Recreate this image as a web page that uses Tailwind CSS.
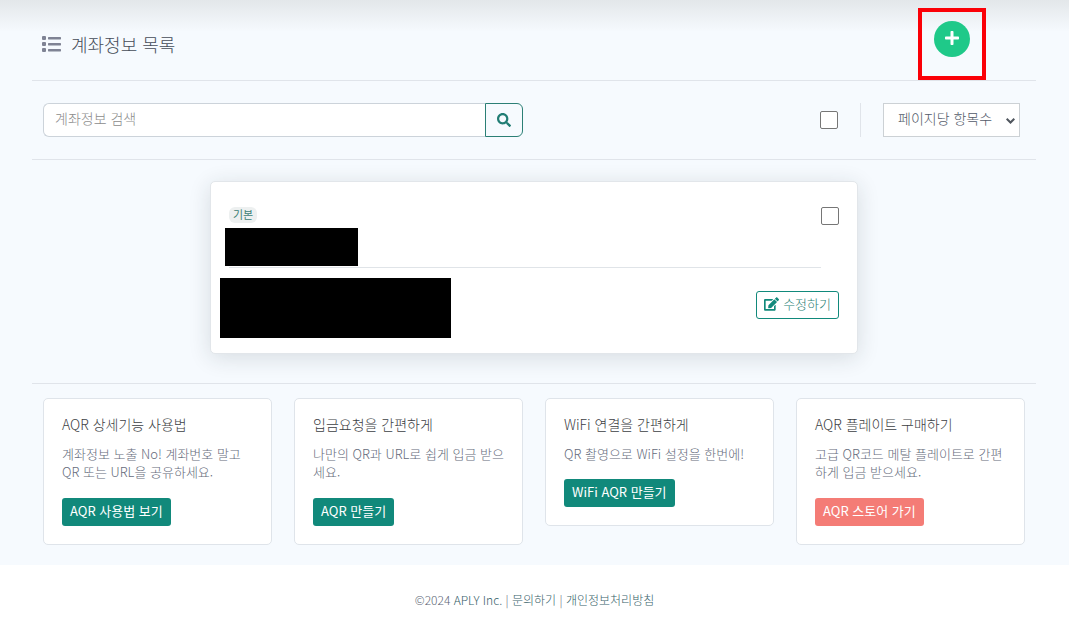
<!DOCTYPE html>
<html lang="ko">
<head>
    <meta charset="UTF-8">
    <meta name="viewport" content="width=device-width, initial-scale=1.0">
    <title>계좌정보 목록</title>
    <script src="https://cdn.jsdelivr.net/npm/@tailwindcss/browser@4"></script>
</head>
<body class="bg-white font-['Noto_Sans_CJK_KR',sans-serif] font-light text-[#687281]">
    <main class="relative bg-[#f6fafe] pb-5 pl-8 pr-[33px]">
        <!-- Shadow under the top bar -->
        <div class="absolute inset-x-0 top-0 h-8 bg-linear-to-b from-[#e3e7ea] to-[#f6fafe]"></div>

        <!-- Header -->
        <header class="relative flex h-20 items-center justify-between pl-[10px] pr-[66px]">
            <h1 class="flex items-center gap-[10px] pt-2 text-lg text-[#454c58]">
                <svg class="h-4 w-[19px] fill-[#7f8394]" viewBox="0 0 19 16" aria-hidden="true">
                    <rect x="0" y="0" width="4" height="4" rx="1"/>
                    <rect x="0" y="6" width="4" height="4" rx="1"/>
                    <rect x="0" y="12" width="4" height="4" rx="1"/>
                    <rect x="6" y="1" width="13" height="2.4" rx=".6"/>
                    <rect x="6" y="7" width="13" height="2.4" rx=".6"/>
                    <rect x="6" y="13" width="13" height="2.4" rx=".6"/>
                </svg>
                계좌정보 목록
            </h1>
            <button type="button" aria-label="추가" class="mb-0.5 flex size-9 items-center justify-center rounded-full bg-[#1fc989] pb-0.5">
                <svg class="h-4 w-[14px] fill-white" viewBox="0 0 448 512" aria-hidden="true">
                    <path d="M416 208H272V64c0-17.67-14.33-32-32-32h-32c-17.67 0-32 14.33-32 32v144H32c-17.67 0-32 14.33-32 32v32c0 17.67 14.33 32 32 32h144v144c0 17.67 14.33 32 32 32h32c17.67 0 32-14.33 32-32V304h144c17.67 0 32-14.33 32-32v-32c0-17.67-14.33-32-32-32z"/>
                </svg>
            </button>
            <!-- Highlight around the add button -->
            <div class="pointer-events-none absolute right-[50px] top-2 z-10 h-[72px] w-[68px] border-4 border-[#fb0007]"></div>
        </header>

        <!-- Search and list options -->
        <div class="flex items-center justify-between border-y border-[#e0e4ea] py-[22px] pl-[11px] pr-4">
            <form class="flex h-[34px] w-[480px]">
                <input type="search" aria-label="계좌정보 검색" placeholder="계좌정보 검색" class="min-w-0 flex-1 rounded-l-md border border-r-0 border-[#ccd3da] bg-white px-[11px] pb-1 text-sm outline-none placeholder:text-[#8c8c8c]">
                <button type="button" aria-label="검색" class="flex w-[38px] items-center justify-center rounded-r-md border border-[#2b7f75]">
                    <svg class="size-[14px] fill-[#217d74]" viewBox="0 0 512 512" aria-hidden="true">
                        <path d="M505 442.7L405.3 343c-4.5-4.5-10.6-7-17-7H372c27.6-35.3 44-79.7 44-128C416 93.1 322.9 0 208 0S0 93.1 0 208s93.1 208 208 208c48.3 0 92.7-16.4 128-44v16.3c0 6.4 2.5 12.5 7 17l99.7 99.7c9.4 9.4 24.6 9.4 33.9 0l28.3-28.3c9.4-9.4 9.4-24.6.1-34zM208 336c-70.7 0-128-57.2-128-128 0-70.7 57.2-128 128-128 70.7 0 128 57.2 128 128 0 70.7-57.2 128-128 128z"/>
                    </svg>
                </button>
            </form>
            <div class="flex items-center gap-[22px]">
                <input type="checkbox" aria-label="전체 선택" class="size-[18px] appearance-none rounded-xs border border-[#767676] bg-white checked:bg-[#11897b]">
                <div class="h-[34px] w-px bg-[#e0e4ea]"></div>
                <div class="relative h-[34px] w-[137px]">
                    <select aria-label="페이지당 항목수" class="size-full appearance-none border border-[#ccd1d5] bg-white pb-1 pl-[14px] text-sm text-[#525a69]">
                        <option>페이지당 항목수</option>
                        <option>10</option>
                        <option>20</option>
                    </select>
                    <svg class="pointer-events-none absolute right-[5px] top-[14px] h-2 w-[9px] fill-none stroke-[#50565e] stroke-2" viewBox="0 0 9 8" aria-hidden="true">
                        <path d="M.7 1.7l3.8 3.8 3.8-3.8"/>
                    </svg>
                </div>
            </div>
        </div>

        <!-- Account card -->
        <section class="border-b border-[#e0e4ea] pb-[29px] pt-[21px]">
            <div class="mx-auto w-full max-w-[648px] rounded-[5px] border border-[#e2e6ea] bg-white px-[18px] pb-[15px] pt-[25px] shadow-[0_4px_22px_rgba(30,40,50,0.14)]">
                <div class="flex items-start">
                    <div class="flex-1 border-b border-[#e0e4e8] pb-px">
                        <span class="flex h-4 w-7 items-center justify-center rounded-md bg-[#edf0f0] pb-0.5 text-[11px] font-normal leading-[14px] text-[#3b8175]">기본</span>
                        <div class="-ml-1 mt-[5px] h-[38px] w-[133px] bg-black"></div>
                    </div>
                    <input type="checkbox" aria-label="계좌 선택" class="size-[18px] appearance-none rounded-xs border border-[#767676] bg-white checked:bg-[#11897b]">
                </div>
                <div class="mt-[10px] flex items-start justify-between">
                    <div class="-ml-[9px] h-[60px] w-[231px] bg-black"></div>
                    <button type="button" class="mt-[13px] flex h-7 items-center gap-1 rounded-[3px] border border-[#11897b] px-[7px] pb-0.5 text-[13px] leading-[18px] text-[#2b7f75]">
                        <svg class="h-[14px] w-[15px] fill-[#11897b]" viewBox="0 0 576 512" aria-hidden="true">
                            <path d="M402.6 83.2l90.2 90.2c3.8 3.8 3.8 10 0 13.8L274.4 405.6l-92.8 10.3c-12.4 1.4-22.9-9.1-21.5-21.5l10.3-92.8L388.8 83.2c3.8-3.8 10-3.8 13.8 0zm162-22.9l-48.8-48.8c-15.2-15.2-39.9-15.2-55.2 0l-35.4 35.4c-3.8 3.8-3.8 10 0 13.8l90.2 90.2c3.8 3.8 10 3.8 13.8 0l35.4-35.4c15.2-15.3 15.2-40 0-55.2zM384 346.2V448H64V128h229.8c3.2 0 6.2-1.3 8.5-3.5l40-40c7.6-7.6 2.2-20.5-8.5-20.5H48C21.5 64 0 85.5 0 112v352c0 26.5 21.5 48 48 48h352c26.5 0 48-21.5 48-48V306.2c0-10.7-12.9-16-20.5-8.5l-40 40c-2.2 2.3-3.5 5.3-3.5 8.5z"/>
                        </svg>
                        수정하기
                    </button>
                </div>
            </div>
        </section>

        <!-- Guide cards -->
        <section class="grid grid-cols-4 items-start gap-x-[22px] px-[11px] pt-[14px]">
            <article class="rounded-[5px] border border-[#dfe4ea] bg-white px-[18px] pb-[18px] pt-[17px]">
                <h2 class="text-sm leading-4 text-[#3c4043]">AQR 상세기능 사용법</h2>
                <p class="mt-[13px] text-[13px] leading-[18px] text-[#656b7b]">계좌정보 노출 No! 계좌번호 말고 QR 또는 URL을 공유하세요.</p>
                <a href="#" class="mt-[17px] flex h-7 w-fit items-center rounded-[3px] bg-[#11897b] px-2 pb-0.5 text-[13px] font-normal text-white">AQR 사용법 보기</a>
            </article>
            <article class="rounded-[5px] border border-[#dfe4ea] bg-white px-[18px] pb-[18px] pt-[17px]">
                <h2 class="text-sm leading-4 text-[#3c4043]">입금요청을 간편하게</h2>
                <p class="mt-[13px] text-[13px] leading-[18px] text-[#656b7b]">나만의 QR과 URL로 쉽게 입금 받으세요.</p>
                <a href="#" class="mt-[17px] flex h-7 w-fit items-center rounded-[3px] bg-[#11897b] px-2 pb-0.5 text-[13px] font-normal text-white">AQR 만들기</a>
            </article>
            <article class="rounded-[5px] border border-[#dfe4ea] bg-white px-[18px] pb-[18px] pt-[17px]">
                <h2 class="text-sm leading-4 text-[#3c4043]">WiFi 연결을 간편하게</h2>
                <p class="mt-[13px] text-[13px] leading-[18px] text-[#656b7b]">QR 촬영으로 WiFi 설정을 한번에!</p>
                <a href="#" class="mt-4 flex h-7 w-fit items-center rounded-[3px] bg-[#11897b] px-2 pb-0.5 text-[13px] font-normal text-white">WiFi AQR 만들기</a>
            </article>
            <article class="rounded-[5px] border border-[#dfe4ea] bg-white px-[18px] pb-[18px] pt-[17px]">
                <h2 class="text-sm leading-4 text-[#3c4043]">AQR 플레이트 구매하기</h2>
                <p class="mt-[13px] text-[13px] leading-[18px] text-[#656b7b]">고급 QR코드 메탈 플레이트로 간편하게 입금 받으세요.</p>
                <a href="#" class="mt-[17px] flex h-7 w-fit items-center rounded-[3px] bg-[#f47c76] px-2 pb-0.5 text-[13px] font-normal text-white">AQR 스토어 가기</a>
            </article>
        </section>
    </main>

    <!-- Footer -->
    <footer class="py-[26px] text-center text-xs leading-[18px] text-[#5c6675]">
        ©2024 <a href="#" class="text-[#38626a]">APLY Inc.</a> | <a href="#" class="text-[#38626a]">문의하기</a> | <a href="#" class="text-[#38626a]">개인정보처리방침</a>
    </footer>
</body>
</html>
